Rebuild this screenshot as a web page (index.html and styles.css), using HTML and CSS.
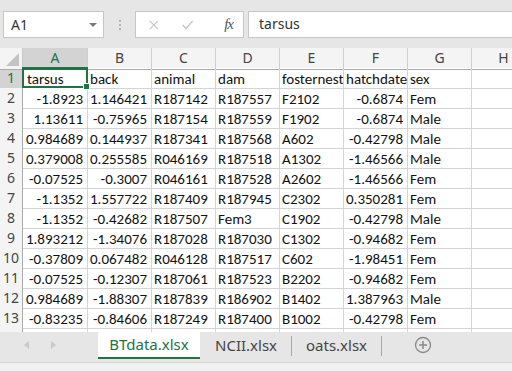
FILE: index.html
```html
<!DOCTYPE html>
<html lang="en">
<head>
  <meta charset="UTF-8">
  <title>BTdata.xlsx</title>
  <link rel="stylesheet" href="styles.css">
</head>
<body>
  <div class="toolbar">
    <div class="name-box">
      <span>A1</span>
      <span class="caret"></span>
    </div>
    <div class="grip"><i></i><i></i><i></i></div>
    <div class="fx-buttons">
      <svg width="12" height="12" viewBox="0 0 12 12"><path d="M1 1 L11 11 M11 1 L1 11" stroke="#c4c4c4" stroke-width="1.4" fill="none"/></svg>
      <svg width="14" height="12" viewBox="0 0 14 12"><path d="M1 6 L5 10.5 L13 1" stroke="#c4c4c4" stroke-width="1.6" fill="none"/></svg>
      <span class="fx">fx</span>
    </div>
    <div class="formula">tarsus</div>
  </div>

  <div class="sheet">
    <div class="row head">
      <div class="corner"><span></span></div>
      <div class="col-head active">A</div>
      <div class="col-head">B</div>
      <div class="col-head">C</div>
      <div class="col-head">D</div>
      <div class="col-head">E</div>
      <div class="col-head">F</div>
      <div class="col-head">G</div>
      <div class="col-head">H</div>
    </div>
    <div class="row">
      <div class="row-head active">1</div>
      <div class="cell selected">tarsus<span class="handle"></span></div>
      <div class="cell">back</div>
      <div class="cell">animal</div>
      <div class="cell">dam</div>
      <div class="cell">fosternest</div>
      <div class="cell">hatchdate</div>
      <div class="cell">sex</div>
      <div class="cell"></div>
    </div>
    <div class="row">
      <div class="row-head">2</div>
      <div class="cell num">-1.8923</div><div class="cell num">1.146421</div><div class="cell">R187142</div><div class="cell">R187557</div><div class="cell">F2102</div><div class="cell num">-0.6874</div><div class="cell">Fem</div><div class="cell"></div>
    </div>
    <div class="row">
      <div class="row-head">3</div>
      <div class="cell num">1.13611</div><div class="cell num">-0.75965</div><div class="cell">R187154</div><div class="cell">R187559</div><div class="cell">F1902</div><div class="cell num">-0.6874</div><div class="cell">Male</div><div class="cell"></div>
    </div>
    <div class="row">
      <div class="row-head">4</div>
      <div class="cell num">0.984689</div><div class="cell num">0.144937</div><div class="cell">R187341</div><div class="cell">R187568</div><div class="cell">A602</div><div class="cell num">-0.42798</div><div class="cell">Male</div><div class="cell"></div>
    </div>
    <div class="row">
      <div class="row-head">5</div>
      <div class="cell num">0.379008</div><div class="cell num">0.255585</div><div class="cell">R046169</div><div class="cell">R187518</div><div class="cell">A1302</div><div class="cell num">-1.46566</div><div class="cell">Male</div><div class="cell"></div>
    </div>
    <div class="row">
      <div class="row-head">6</div>
      <div class="cell num">-0.07525</div><div class="cell num">-0.3007</div><div class="cell">R046161</div><div class="cell">R187528</div><div class="cell">A2602</div><div class="cell num">-1.46566</div><div class="cell">Fem</div><div class="cell"></div>
    </div>
    <div class="row">
      <div class="row-head">7</div>
      <div class="cell num">-1.1352</div><div class="cell num">1.557722</div><div class="cell">R187409</div><div class="cell">R187945</div><div class="cell">C2302</div><div class="cell num">0.350281</div><div class="cell">Fem</div><div class="cell"></div>
    </div>
    <div class="row">
      <div class="row-head">8</div>
      <div class="cell num">-1.1352</div><div class="cell num">-0.42682</div><div class="cell">R187507</div><div class="cell">Fem3</div><div class="cell">C1902</div><div class="cell num">-0.42798</div><div class="cell">Male</div><div class="cell"></div>
    </div>
    <div class="row">
      <div class="row-head">9</div>
      <div class="cell num">1.893212</div><div class="cell num">-1.34076</div><div class="cell">R187028</div><div class="cell">R187030</div><div class="cell">C1302</div><div class="cell num">-0.94682</div><div class="cell">Fem</div><div class="cell"></div>
    </div>
    <div class="row">
      <div class="row-head">10</div>
      <div class="cell num">-0.37809</div><div class="cell num">0.067482</div><div class="cell">R046128</div><div class="cell">R187517</div><div class="cell">C602</div><div class="cell num">-1.98451</div><div class="cell">Fem</div><div class="cell"></div>
    </div>
    <div class="row">
      <div class="row-head">11</div>
      <div class="cell num">-0.07525</div><div class="cell num">-0.12307</div><div class="cell">R187061</div><div class="cell">R187523</div><div class="cell">B2202</div><div class="cell num">-0.94682</div><div class="cell">Fem</div><div class="cell"></div>
    </div>
    <div class="row">
      <div class="row-head">12</div>
      <div class="cell num">0.984689</div><div class="cell num">-1.88307</div><div class="cell">R187839</div><div class="cell">R186902</div><div class="cell">B1402</div><div class="cell num">1.387963</div><div class="cell">Male</div><div class="cell"></div>
    </div>
    <div class="row">
      <div class="row-head">13</div>
      <div class="cell num">-0.83235</div><div class="cell num">-0.84606</div><div class="cell">R187249</div><div class="cell">R187400</div><div class="cell">B1002</div><div class="cell num">-0.42798</div><div class="cell">Fem</div><div class="cell"></div>
    </div>
    <div class="row">
      <div class="row-head"></div>
      <div class="cell"></div><div class="cell"></div><div class="cell"></div><div class="cell"></div><div class="cell"></div><div class="cell"></div><div class="cell"></div><div class="cell"></div>
    </div>
  </div>

  <div class="tabbar">
    <div class="tab-nav">
      <span class="arrow left"></span>
      <span class="arrow right"></span>
    </div>
    <div class="tab active">BTdata.xlsx</div>
    <div class="tab">NCII.xlsx</div>
    <div class="tab-sep"></div>
    <div class="tab">oats.xlsx</div>
    <div class="tab-sep"></div>
    <div class="add-sheet">
      <svg width="18" height="18" viewBox="0 0 18 18"><circle cx="9" cy="9" r="7.5" stroke="#8a8a8a" stroke-width="1.3" fill="none"/><path d="M9 5 V13 M5 9 H13" stroke="#8a8a8a" stroke-width="1.5"/></svg>
    </div>
  </div>
  <div class="statusbar"></div>
</body>
</html>
```

FILE: styles.css
```css
body {
  margin: 0;
  padding: 0;
  width: 512px;
  height: 371px;
  overflow: hidden;
  background-color: #e6e6e6;
  font-family: "Noto Sans", "Open Sans", sans-serif;
  color: #333;
}

/* formula bar */
.toolbar {
  height: 48px;
  box-sizing: border-box;
  padding-top: 11px;
  display: flex;
  align-items: flex-start;
}

.name-box {
  margin-left: 3px;
  width: 101px;
  height: 27px;
  box-sizing: border-box;
  background-color: white;
  border: 1px solid #c6c6c6;
  display: flex;
  align-items: center;
  justify-content: space-between;
  padding: 0 6px 0 7px;
  font-size: 14px;
  color: #333;
}

.caret {
  width: 0;
  height: 0;
  border-left: 4px solid transparent;
  border-right: 4px solid transparent;
  border-top: 4px solid #7a7a7a;
}

.grip {
  width: 31px;
  height: 27px;
  display: flex;
  flex-direction: column;
  align-items: center;
  justify-content: center;
  gap: 2px;
}

.grip i {
  width: 2px;
  height: 2px;
  background-color: #b4b4b4;
}

.fx-buttons {
  width: 109px;
  height: 27px;
  box-sizing: border-box;
  background-color: white;
  border: 1px solid #c6c6c6;
  display: flex;
  align-items: center;
  padding: 0 10px 0 13px;
  gap: 23px;
}

.fx {
  margin-left: 8px;
  font-family: "Liberation Serif", serif;
  font-style: italic;
  font-size: 15px;
  color: #555;
  letter-spacing: -1px;
}

.formula {
  margin-left: 4px;
  flex-grow: 1;
  height: 27px;
  box-sizing: border-box;
  background-color: white;
  border: 1px solid #c6c6c6;
  border-right: none;
  padding-left: 10px;
  font-size: 14px;
  line-height: 24px;
  color: #333;
}

/* grid */
.sheet {
  height: 284px;
  overflow: hidden;
  background-color: white;
  font-family: Carlito, Calibri, Lato, sans-serif;
  font-size: 15px;
  color: #111;
}

.row {
  display: grid;
  grid-template-columns: 23px 65px repeat(7, 64px) 60px;
  height: 20px;
}

.row.head {
  background-color: #f4f4f4;
}

.corner {
  position: relative;
  background-color: #f4f4f4;
  border-right: 1px solid #c8c8c8;
  border-bottom: 1px solid #ababab;
}

.corner span {
  position: absolute;
  right: 3px;
  bottom: 3px;
  width: 0;
  height: 0;
  border-left: 13px solid transparent;
  border-bottom: 13px solid #c4c4c4;
}

.col-head {
  box-sizing: border-box;
  border-right: 1px solid #d0d0d0;
  border-bottom: 1px solid #ababab;
  text-align: center;
  font-size: 14px;
  line-height: 20px;
  color: #444;
  font-family: "Noto Sans", sans-serif;
}

.col-head.active {
  background-color: #d3d3d3;
  color: #217346;
  border-bottom: 2px solid #217346;
}

.row-head {
  box-sizing: border-box;
  background-color: #f4f4f4;
  border-right: 1px solid #ababab;
  border-bottom: 1px solid #d0d0d0;
  text-align: center;
  font-size: 14px;
  line-height: 20px;
  color: #444;
  font-family: "Noto Sans", sans-serif;
}

.row-head.active {
  background-color: #d3d3d3;
  color: #217346;
}

.cell {
  position: relative;
  box-sizing: border-box;
  border-right: 1px solid #d4d4d4;
  border-bottom: 1px solid #d4d4d4;
  padding: 2px 2px 0 2px;
  line-height: 19px;
  white-space: nowrap;
  overflow: hidden;
}

.cell.num {
  text-align: right;
  padding-right: 4px;
}

.cell.selected {
  overflow: visible;
  border: 2px solid #217346;
  margin: -1px 0 0 -1px;
  height: 21px;
  padding: 1px 0 0 3px;
  line-height: 19px;
  z-index: 1;
}

.handle {
  position: absolute;
  right: -4px;
  bottom: -4px;
  width: 5px;
  height: 5px;
  background-color: #217346;
  border: 1px solid white;
}

/* sheet tabs */
.tabbar {
  height: 30px;
  display: flex;
  align-items: flex-start;
  background-color: #e6e6e6;
  font-size: 15px;
  color: #444;
}

.tab-nav {
  width: 98px;
  height: 26px;
  display: flex;
  align-items: center;
  padding-left: 24px;
  box-sizing: border-box;
  gap: 22px;
}

.arrow {
  width: 0;
  height: 0;
  border-top: 4px solid transparent;
  border-bottom: 4px solid transparent;
}

.arrow.left {
  border-right: 5px solid #cacaca;
}

.arrow.right {
  border-left: 5px solid #cacaca;
}

.tab {
  height: 26px;
  line-height: 26px;
  padding: 0 14px;
}

.tab.active {
  width: 102px;
  box-sizing: border-box;
  text-align: center;
  background-color: white;
  color: #217346;
  border-bottom: 2px solid #217346;
  height: 27px;
  line-height: 25px;
  padding: 0;
  margin-right: 1px;
}

.tab-sep {
  width: 1px;
  height: 20px;
  margin-top: 4px;
  background-color: #a8a8a8;
}

.add-sheet {
  margin-left: 32px;
  height: 26px;
  display: flex;
  align-items: center;
}

.statusbar {
  height: 9px;
  background-color: #f0f0f0;
  border-top: 1px solid #d6d6d6;
}
```
